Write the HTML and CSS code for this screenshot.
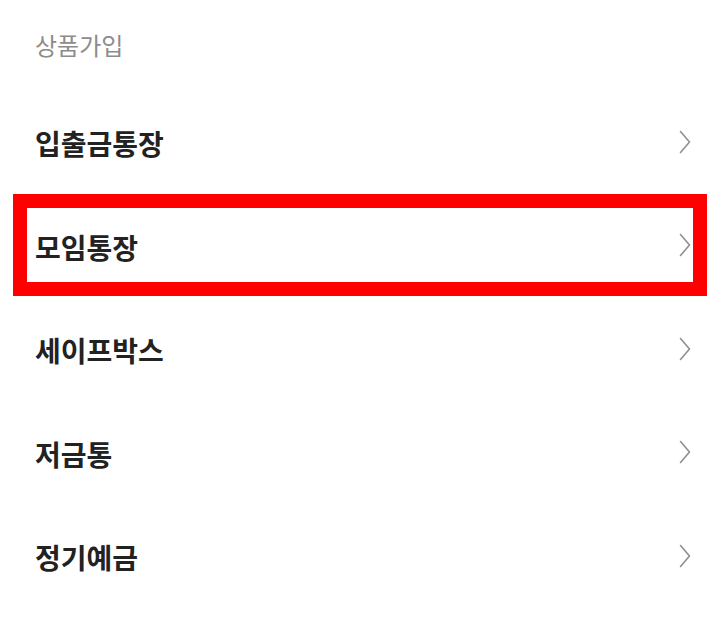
FILE: index.html
```html
<!DOCTYPE html>
<html lang="ko">
<head>
<meta charset="utf-8">
<link rel="stylesheet" href="styles.css">
</head>
<body>
<div class="page">
  <div class="section-title">상품가입</div>
  <ul class="menu">
    <li class="row"><span class="label">입출금통장</span><svg class="chev" viewBox="0 0 12 24"><path d="M1.5 1.5 L10.5 12 L1.5 22.5"/></svg></li>
    <li class="row highlighted"><span class="label">모임통장</span><svg class="chev" viewBox="0 0 12 24"><path d="M1.5 1.5 L10.5 12 L1.5 22.5"/></svg></li>
    <li class="row"><span class="label">세이프박스</span><svg class="chev" viewBox="0 0 12 24"><path d="M1.5 1.5 L10.5 12 L1.5 22.5"/></svg></li>
    <li class="row"><span class="label">저금통</span><svg class="chev" viewBox="0 0 12 24"><path d="M1.5 1.5 L10.5 12 L1.5 22.5"/></svg></li>
    <li class="row"><span class="label">정기예금</span><svg class="chev" viewBox="0 0 12 24"><path d="M1.5 1.5 L10.5 12 L1.5 22.5"/></svg></li>
  </ul>
</div>
</body>
</html>
```
FILE: styles.css
```css
html, body {
  margin: 0;
  padding: 0;
  background: #ffffff;
}
body {
  font-family: "Noto Sans CJK KR", "Noto Sans", sans-serif;
  width: 720px;
  height: 620px;
  overflow: hidden;
}
.page {
  display: flex;
  flex-direction: column;
}
.section-title {
  height: 90px;
  line-height: 90px;
  padding-left: 35px;
  font-size: 24px;
  font-weight: 400;
  color: #8c8c8c;
}
.menu {
  list-style: none;
  margin: 0;
  padding: 0;
}
.row {
  position: relative;
  height: 103.5px;
  display: flex;
  align-items: center;
  justify-content: space-between;
  padding: 0 29px 0 35px;
}
.label {
  font-size: 28px;
  font-weight: 700;
  color: #222222;
  line-height: 1;
  padding-top: 3px;
}
.chev {
  width: 12px;
  height: 24px;
  fill: none;
  stroke: #8f8f8f;
  stroke-width: 1.6;
  stroke-linecap: round;
  stroke-linejoin: round;
}
.highlighted::after {
  content: "";
  position: absolute;
  left: 13px;
  right: 13px;
  top: 0.5px;
  bottom: 1px;
  border: 14px solid #ff0000;
  pointer-events: none;
}
```
